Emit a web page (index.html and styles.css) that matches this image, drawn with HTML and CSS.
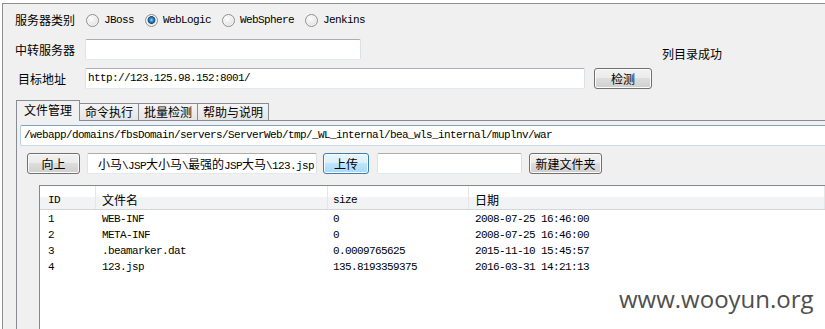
FILE: index.html
```html
<!DOCTYPE html>
<html lang="zh-CN">

<head>
    <meta charset="UTF-8">
    <title>WebLogic 文件管理</title>
    <link rel="stylesheet" href="styles.css">
</head>

<body>
    <div class="window">
        <div class="top">
            <div class="row row-type">
                <span class="label">服务器类别</span>
                <label class="radio"><span class="radio-dot"></span><span class="mono">JBoss</span></label>
                <label class="radio checked"><span class="radio-dot"></span><span class="mono">WebLogic</span></label>
                <label class="radio"><span class="radio-dot"></span><span class="mono">WebSphere</span></label>
                <label class="radio"><span class="radio-dot"></span><span class="mono">Jenkins</span></label>
            </div>
            <div class="fields">
                <div class="field-rows">
                    <div class="row row-relay">
                        <span class="label">中转服务器</span>
                        <div class="field field-relay"></div>
                    </div>
                    <div class="row row-target">
                        <span class="label label-target">目标地址</span>
                        <div class="field field-target mono">http://123.125.98.152:8001/</div>
                        <button class="btn btn-check">检测</button>
                    </div>
                </div>
                <span class="status">列目录成功</span>
            </div>
        </div>

        <div class="tabs">
            <div class="tab active">文件管理</div>
            <div class="tab">命令执行</div>
            <div class="tab">批量检测</div>
            <div class="tab">帮助与说明</div>
        </div>
        <div class="panel">
            <div class="field path mono">/webapp/domains/fbsDomain/servers/ServerWeb/tmp/_WL_internal/bea_wls_internal/muplnv/war</div>
            <div class="row toolbar">
                <button class="btn btn-up">向上</button>
                <div class="field field-file">
                    <span class="file-path">小马<span class="mono">\JSP</span>大小马<span class="mono">\</span>最强的<span class="mono">JSP</span>大马<span class="mono">\123.jsp</span></span>
                </div>
                <button class="btn btn-focus btn-upload">上传</button>
                <div class="field field-folder"></div>
                <button class="btn btn-mkdir">新建文件夹</button>
            </div>
            <div class="list">
                <div class="list-head">
                    <span class="cell mono">ID</span>
                    <span class="cell">文件名</span>
                    <span class="cell mono">size</span>
                    <span class="cell">日期</span>
                </div>
                <div class="list-body">
                    <div class="list-row mono">
                        <span class="cell">1</span><span class="cell">WEB-INF</span><span class="cell">0</span><span class="cell">2008-07-25 16:46:00</span>
                    </div>
                    <div class="list-row mono">
                        <span class="cell">2</span><span class="cell">META-INF</span><span class="cell">0</span><span class="cell">2008-07-25 16:46:00</span>
                    </div>
                    <div class="list-row mono">
                        <span class="cell">3</span><span class="cell">.beamarker.dat</span><span class="cell">0.0009765625</span><span class="cell">2015-11-10 15:45:57</span>
                    </div>
                    <div class="list-row mono">
                        <span class="cell">4</span><span class="cell">123.jsp</span><span class="cell">135.8193359375</span><span class="cell">2016-03-31 14:21:13</span>
                    </div>
                </div>
            </div>
        </div>
    </div>

    <div class="watermark">www.wooyun.org</div>
</body>

</html>
```

FILE: styles.css
```css
* {
    box-sizing: border-box;
}

body {
    margin: 0;
    background-color: #fff;
    font-family: "Noto Sans CJK SC", sans-serif;
    font-size: 12px;
    color: #000;
    overflow: hidden;
}

.mono {
    font-family: "Liberation Mono", "Noto Sans CJK SC", monospace;
    font-size: 11px;
    letter-spacing: -0.6px;
}

.window {
    margin: 3px 0 0 2px;
    height: 330px;
    border-top: 1px solid #8d9093;
    border-left: 1px solid #8d9093;
    background-color: #f0f0f0;
    overflow: hidden;
}

.top {
    padding: 6px 0 0 12px;
}

.row {
    display: flex;
    align-items: center;
}

.row-type {
    height: 20px;
}

.label {
    flex: none;
    width: 70px;
    line-height: 16px;
}

.row-type .label {
    width: 71px;
}

.label-target {
    padding-left: 3px;
}

.radio {
    display: flex;
    align-items: center;
    margin-right: 11px;
    line-height: 16px;
}

.radio-dot {
    width: 13px;
    height: 13px;
    margin-right: 5px;
    border: 1px solid #8e8f8f;
    border-radius: 50%;
    background: radial-gradient(circle at 40% 35%, #fdfdfd, #e6e6e6 60%, #d2d2d2);
    box-shadow: inset 0 0 0 1px #f6f6f6;
}

.radio.checked .radio-dot {
    background: radial-gradient(circle at 50% 45%, #9fdcff 0, #3a93d6 1.5px, #1d5f98 3px, #17436b 3.6px, #dcdcdc 4.2px, #f2f2f2 6px);
}

.fields {
    display: flex;
    margin-top: 9px;
}

.row-relay,
.row-target {
    height: 21px;
}

.row-target {
    margin-top: 8px;
}

.status {
    margin-left: 10px;
    padding-top: 7px;
    line-height: 16px;
}

.field {
    flex: none;
    height: 21px;
    padding: 0 2px;
    background-color: #fff;
    border: 1px solid;
    border-color: #abadb3 #dbdfe6 #e3e9ef #e2e3ea;
    border-radius: 2px;
    line-height: 19px;
    white-space: nowrap;
    overflow: hidden;
}

.field-relay {
    width: 276px;
}

.field-target {
    width: 500px;
}

.btn {
    flex: none;
    height: 21px;
    padding: 0;
    border: 1px solid #707070;
    border-radius: 3px;
    background: linear-gradient(#f2f2f2, #ebebeb 50%, #dddddd 50%, #cfcfcf);
    box-shadow: inset 0 0 0 1px #fbfbfb;
    font-family: "Noto Sans CJK SC", sans-serif;
    font-size: 12px;
    line-height: 19px;
    color: #000;
}

.btn-focus {
    border-color: #3c7fb1;
    background: linear-gradient(#eaf6fd, #d9f0fc 50%, #bee6fd 50%, #a7d9f5);
}

.btn-check {
    width: 58px;
    margin-left: 9px;
}

/* tabs */
.tabs {
    display: flex;
    align-items: flex-end;
    height: 21px;
    margin: 11px 0 -1px 13px;
    position: relative;
}

.tab {
    height: 18px;
    padding: 0 5px;
    border: 1px solid #898c95;
    border-left: none;
    background: linear-gradient(#f5f5f5, #e4e4e4);
    line-height: 16px;
}

.tab.active {
    height: 21px;
    padding: 0 7px;
    border-left: 1px solid #898c95;
    border-bottom: none;
    background: #f0f0f0;
    line-height: 18px;
}

.panel {
    height: 320px;
    margin-left: 13px;
    padding: 4px 0 0 3px;
    border-top: 1px solid #898c95;
    border-left: 1px solid #898c95;
}

.path {
    display: block;
    width: auto;
    padding-left: 3px;
    border-color: #7ca4c7 #c5daed #c5daed #b8d1e8;
    border-right: none;
    border-radius: 2px 0 0 2px;
}

.toolbar {
    height: 21px;
    margin-top: 7px;
}

.btn-up {
    width: 53px;
    margin-left: 7px;
}

.field-file {
    display: flex;
    justify-content: flex-end;
    width: 230px;
    margin-left: 7px;
}

.file-path {
    flex: none;
    white-space: nowrap;
}

.btn-upload {
    width: 46px;
    margin-left: 6px;
}

.field-folder {
    width: 145px;
    margin-left: 8px;
}

.btn-mkdir {
    width: 73px;
    margin-left: 7px;
}

/* file list */
.list {
    height: 200px;
    margin: 11px 0 0 19px;
    border: 1px solid #828790;
    border-right: none;
    background-color: #fff;
}

.list-head,
.list-row {
    display: grid;
    grid-template-columns: 56px 232px 141px 1fr;
}

.list-head {
    height: 24px;
    padding-top: 6px;
    border-bottom: 1px solid #d5d5d5;
    background: linear-gradient(#fff 0, #fff 11px, #f2f3f5 11px);
    line-height: 16px;
}

.list-head .cell {
    border-right: 1px solid #e6e6e6;
    margin-top: -6px;
    padding-top: 6px;
}

.cell {
    padding-left: 6px;
    white-space: nowrap;
}

.cell:first-child {
    padding-left: 8px;
}

.cell:nth-child(3) {
    padding-left: 5px;
}

.list-body {
    padding-top: 1px;
}

.list-row {
    height: 16px;
    line-height: 16px;
}

.watermark {
    position: absolute;
    left: 619px;
    top: 287px;
    font-family: "Open Sans", sans-serif;
    font-size: 24px;
    line-height: 24px;
    color: #4f4f4f;
}
```
